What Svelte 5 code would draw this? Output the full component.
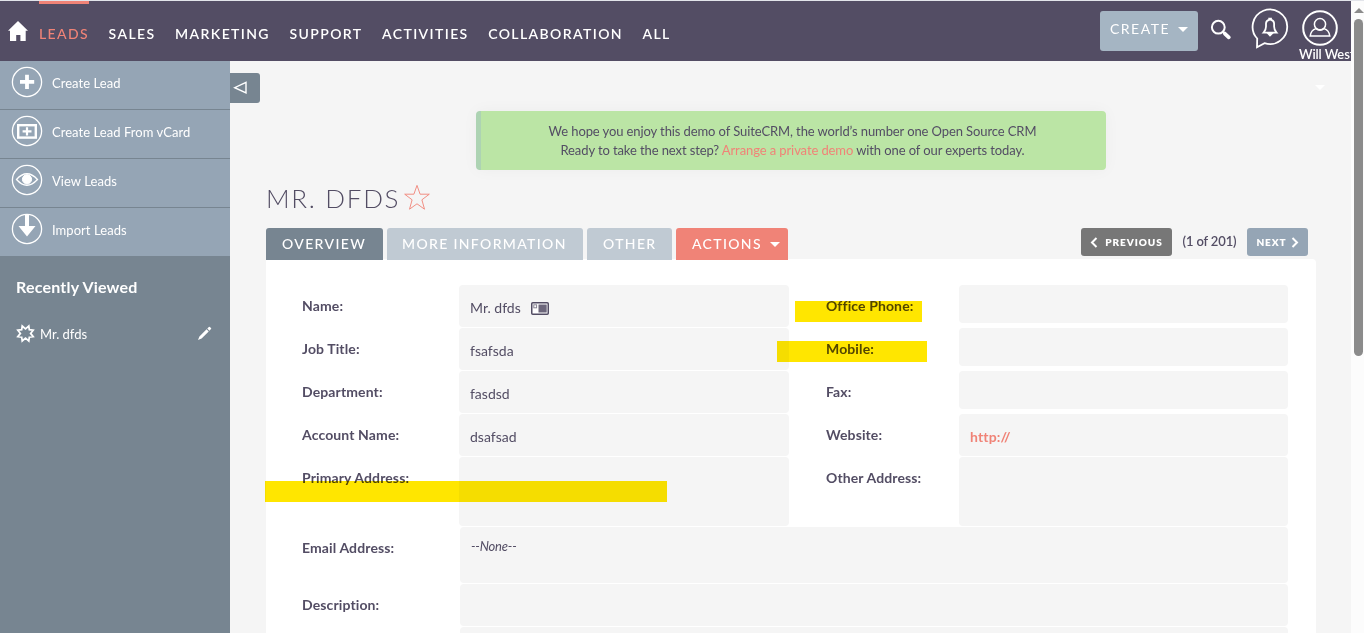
<script>
  const nav = ['LEADS', 'SALES', 'MARKETING', 'SUPPORT', 'ACTIVITIES', 'COLLABORATION', 'ALL'];
  const actions = [
    { label: 'Create Lead', icon: 'plus' },
    { label: 'Create Lead From vCard', icon: 'card' },
    { label: 'View Leads', icon: 'eye' },
    { label: 'Import Leads', icon: 'down' }
  ];
  const rows = [
    { l: 'Name:', v: 'Mr. dfds', card: true, r: 'Office Phone:', short: true },
    { l: 'Job Title:', v: 'fsafsda', r: 'Mobile:', short: true },
    { l: 'Department:', v: 'fasdsd', r: 'Fax:', short: true },
    { l: 'Account Name:', v: 'dsafsad', r: 'Website:', link: 'http://' },
    { l: 'Primary Address:', v: '', r: 'Other Address:', tall: true }
  ];
</script>

<div class="page">
  <div class="view">
    <header>
      <svg class="home" width="20" height="20" viewBox="0 0 20 20"><path fill="#fff" d="M10 0 20 9.7H17.7V20H12.4V14H8.2V20H2V9.7H0Z" /></svg>
      <nav>
        {#each nav as n, i}<a class:active={i === 0}>{n}</a>{/each}
      </nav>
      <div class="create">CREATE<i class="caret"></i></div>
      <svg class="search" width="22" height="22" viewBox="0 0 22 22"><circle cx="8.3" cy="8.2" r="6.4" fill="none" stroke="#fff" stroke-width="2" /><path d="M14.8 14.6 18.8 18.3" stroke="#fff" stroke-width="3.8" stroke-linecap="round" /><path d="M12.5 12.4 16 15.8" stroke="#fff" stroke-width="2" /></svg>
      <svg class="bell" width="38" height="42" viewBox="0 0 38 42" fill="none" stroke="#fff" stroke-width="1.8"><path d="M6.2 30.5A17.3 17.3 0 1 1 13.5 35.2L6 39.3Z" /><path d="M12.6 24.6Q15 22 15 18.5V15.5Q15.1 12.4 18.2 11.8V10.6H20V11.8Q23 12.4 23.1 15.5V18.5Q23.1 22 25.5 24.6Z" /><path d="M17.2 25.5H21L19 27.4Z" fill="#fff" /></svg>
      <div class="user">
        <svg width="36" height="36" viewBox="0 0 36 36" fill="none" stroke="#fff" stroke-width="2"><circle cx="18" cy="18" r="16.8" /><circle cx="18" cy="14.2" r="5.6" stroke-width="1.5" /><path stroke-width="1.5" d="M14 18.6Q9 20 8.2 26H27.8Q27 20 22 18.6Q18 21.8 14 18.6Z" /></svg>
        <span>Will West</span>
      </div>
    </header>
    <div class="body">
      <aside>
        {#each actions as a}
          <div class="act">
            <svg width="32" height="32" viewBox="0 0 32 32" fill="none" stroke="#fff">
              <circle cx="16" cy="16" r="14.6" stroke-width="1.3" />
              {#if a.icon === 'plus'}<path d="M16 8.8V23M9 15.8H23.2" stroke-width="3.8" />
              {:else if a.icon === 'card'}<rect x="7.2" y="10.2" width="17.6" height="12.4" stroke-width="2.4" /><path d="M16 12.2V20.6M11.6 16.3H20.5" stroke-width="2.2" />
              {:else if a.icon === 'eye'}<path d="M5.5 15.5Q15.8 4 26.5 15.5Q15.8 27 5.5 15.5Z" stroke-width="1.3" /><circle cx="16" cy="15.3" r="4.6" fill="#fff" />
              {:else}<path d="M14 1.5H18V13H24.5L16 23.5 7.5 13H14Z" fill="#fff" stroke="none" />{/if}
            </svg>
            <span>{a.label}</span>
          </div>
        {/each}
        <h3>Recently Viewed</h3>
        <div class="recent">
          <svg width="19" height="19" viewBox="0 0 19 19"><path fill="none" stroke="#fff" stroke-width="1.7" d="M6.2 2 9.5 4.8 12.8 2 13.3 5.7 17.2 6.2 14.6 9.4 17.2 12.6 13.3 13.2 12.8 17 9.5 14.2 6.2 17 5.7 13.2 1.8 12.6 4.4 9.4 1.8 6.2 5.7 5.7Z" /></svg>
          <span>Mr. dfds</span>
          <svg class="pen" width="15" height="15" viewBox="0 0 15 15" fill="#fff"><path d="M1 14 2.4 10.4 9.6 3.3 11.7 5.4 4.6 12.5ZM10.3 2.5 11.9.9Q12.4.5 12.9 1L14 2.1Q14.5 2.6 14 3.1L12.4 4.7Z" /></svg>
        </div>
      </aside>
      <div class="toggle"><svg width="15" height="14" viewBox="0 0 15 14"><path d="M13 1.4V12L1.7 6.7Z" fill="none" stroke="#fff" stroke-width="1.4" /></svg></div>
      <i class="caret ghost"></i>
      <main>
        <div class="notice">
          <p>We hope you enjoy this demo of SuiteCRM, the world’s number one Open Source CRM</p>
          <p>Ready to take the next step? <a>Arrange a private demo</a> with one of our experts today.</p>
        </div>
        <h2><span>MR. DFDS</span><svg width="28" height="27" viewBox="0 0 28 27"><path d="M14 1.4 17.1 10.2H26.3L18.9 15.8 21.5 25.2 14 19.8 6.5 25.2 9.1 15.8 1.7 10.2H10.9Z" fill="none" stroke="#f08377" stroke-width=".9" /></svg></h2>
        <div class="bar">
          <div class="tab t1">OVERVIEW</div>
          <div class="tab t2">MORE INFORMATION</div>
          <div class="tab t3">OTHER</div>
          <div class="tab t4">ACTIONS<i class="caret"></i></div>
          <div class="pager">
            <div class="btn prev"><svg width="8" height="11" viewBox="0 0 8 11"><path d="M6.5 1 2 5.5 6.5 10" /></svg>PREVIOUS</div>
            <span>(1 of 201)</span>
            <div class="btn next">NEXT<svg width="8" height="11" viewBox="0 0 8 11"><path d="M1.5 1 6 5.5 1.5 10" /></svg></div>
          </div>
        </div>
        <section>
          {#each rows as r}
            <div class="row" class:tall={r.tall}>
              <label>{r.l}</label>
              <div class="val">{r.v}{#if r.card}<svg width="18" height="13" viewBox="0 0 18 13"><rect x=".75" y=".75" width="16.5" height="11.5" rx="1" fill="#fff" stroke="#534d64" stroke-width="1.5" /><rect x="7.5" y="2.5" width="8.2" height="8" fill="#6c667b" /><rect x="2.8" y="2.8" width="2.8" height="3" fill="none" stroke="#888494" /></svg>{/if}</div>
              <label class="second">{r.r}</label>
              <div class="val" class:short={r.short}>{#if r.link}<b>{r.link}</b>{/if}</div>
            </div>
          {/each}
          <div class="row wide email"><label>Email Address:</label><div class="val"><em>--None--</em></div></div>
          <div class="row wide"><label>Description:</label><div class="val"></div></div>
          <div class="row wide"><label></label><div class="val"></div></div>
        </section>
      </main>
    </div>
    <i class="mark m1"></i><i class="mark m2"></i><i class="mark m3"></i>
  </div>
  <div class="scroll"><i class="up"></i><div class="thumb"></div></div>
</div>

<style>
  :global(body) { margin: 0; overflow: hidden; }
  .page { display: flex; width: 1364px; height: 633px; overflow: hidden; font: 13px/18px Lato, sans-serif; color: #534d64; position: relative; box-sizing: border-box; border-top: 1px solid #e2e4ea; background: #fcfcfc; }
  .page :global(*) { box-sizing: border-box; }
  .view { width: 1351px; background: #f5f5f5; overflow: hidden; flex: none; }
  header { height: 60px; background: #534d64; display: flex; color: #fff; padding-left: 8px; align-items: flex-start; }
  svg { display: block; flex: none; }
  .home { margin-top: 20px; margin-right: 11px; }
  nav { display: flex; gap: 19.6px; flex: 1; }
  nav a { height: 60px; font-size: 14px; line-height: 18px; letter-spacing: 1.38px; padding-top: 21px; border-top: 3px solid transparent; font-weight: 600; white-space: nowrap; }
  nav a.active { color: #f08377; border-color: #f08377; font-weight: 500; }
  .caret { display: block; width: 0; height: 0; border: 5px solid transparent; border-top-color: #fff; border-bottom: 0; }
  .create { width: 98px; height: 40px; margin-top: 10px; background: #a5b5c3; border-radius: 3px; display: flex; align-items: center; padding: 0 0 4px 10px; font-size: 14px; letter-spacing: 1.5px; gap: 8px; }
  .search { margin: 18px 0 0 12px; }
  .bell { margin: 7px 0 0 19px; }
  .user { width: 52px; padding-top: 9px; margin-left: 10px; font-weight: 600; flex: none; }
  .user svg { margin-left: 3px; }
  .user span { display: block; white-space: nowrap; line-height: 16px; letter-spacing: -.1px; }
  .body { display: flex; position: relative; height: 572px; }
  aside { width: 230px; background: #778591; color: #fff; flex: none; }
  .act { height: 49px; background: #95a5b5; border-bottom: 1px solid #778591; display: flex; padding: 5px 0 0 11px; gap: 9px; }
  .act:nth-child(4) { height: 48px; border: 0; }
  .act span { line-height: 34px; font-size: 13px; letter-spacing: .05px; }
  h3 { font-size: 16px; line-height: 20px; margin: 21px 16px 0; letter-spacing: .2px; }
  .recent { display: flex; align-items: center; margin-top: 27px; padding: 0 18px 0 16px; gap: 5px; }
  .pen { margin-left: auto; }
  .toggle { width: 30px; height: 30px; margin-top: 12px; background: #778591; border-radius: 0 3px 3px 0; padding: 8px 0 0 3px; flex: none; }
  .ghost { position: absolute; left: 1315px; top: 24px; }
  main { width: 1050px; margin-left: 6px; padding-top: 50px; }
  .notice { width: 630px; height: 59px; margin-left: 210px; background: #bbe5a5; border-left: 5px solid #add3b3; border-radius: 4px; text-align: center; padding: 11px 2px 0 0; box-shadow: 0 0 16px rgba(0,0,0,.04); }
  p { margin: 0; line-height: 19px; letter-spacing: -.1px; }
  p a { color: #f08377; }
  h2 { display: flex; font-weight: 300; font-size: 26px; line-height: 30px; letter-spacing: 1.7px; margin: 13px 0 0; height: 45px; gap: 3px; }
  h2 svg { margin-top: 1px; }
  .bar { display: flex; height: 31px; gap: 4px; }
  .tab { height: 32px; border-radius: 3px 3px 0 0; color: #fff; font-size: 14px; line-height: 32px; letter-spacing: 1.35px; padding-left: 16px; background: #c0cad3; position: relative; white-space: nowrap; font-weight: 500; }
  .t1 { width: 117px; background: #778591; }
  .t2 { width: 196px; padding-left: 15px; }
  .t3 { width: 85px; }
  .t4 { width: 112px; background: #f08377; display: flex; align-items: center; gap: 8px; }
  .pager { margin-left: auto; margin-right: 8px; display: flex; }
  .pager span { width: 75px; text-align: center; line-height: 27px; font-weight: 600; letter-spacing: -.15px; }
  .btn { height: 28px; border-radius: 3px; background: #777; color: #fff; font-size: 10px; font-weight: 800; letter-spacing: .9px; display: flex; align-items: center; justify-content: center; }
  .prev { width: 91px; gap: 7px; }
  .next { width: 61px; background: #95a5b5; gap: 4px; }
  .btn path { fill: none; stroke: #fff; stroke-width: 2; }
  section { background: #fff; height: 400px; padding: 26px 28px 0 36px; border-radius: 0 4px 0 0; }
  .row { display: grid; grid-template-columns: 157px 330px 170px 329px; height: 43px; }
  .row.tall { height: 70px; }
  .wide { grid-template-columns: 158px 828px; }
  .email { height: 57px; }
  label { font-size: 14px; font-weight: 700; line-height: 18px; padding-top: 12px; letter-spacing: .12px; white-space: nowrap; }
  .second { padding-left: 37px; }
  .val { height: calc(100% - 1px); background: #f5f5f5; border-radius: 4px; padding: 14px 0 0 11px; display: flex; align-items: flex-start; font-size: 14px; }
  .val svg { margin: 3px 0 0 10px; }
  .val.short { height: 38px; }
  .email .val { padding-top: 10px; font-size: 13px; letter-spacing: -.2px; }
  b { color: #f08377; letter-spacing: .15px; }
  .mark { position: absolute; background: #ffe600; mix-blend-mode: multiply; height: 21px; }
  .m1 { left: 795px; top: 300px; width: 127px; }
  .m2 { left: 777px; top: 340px; width: 150px; }
  .m3 { left: 265px; top: 479.5px; width: 402px; }
  .scroll { width: 13px; padding: 7px 0 0 3px; }
  .up { display: block; width: 0; border: 5px solid transparent; border-top: 0; border-bottom-color: #8b8b8b; }
  .thumb { width: 9px; height: 337px; margin-top: 6px; border-radius: 5px; background: #8b8b8b; }
</style>
